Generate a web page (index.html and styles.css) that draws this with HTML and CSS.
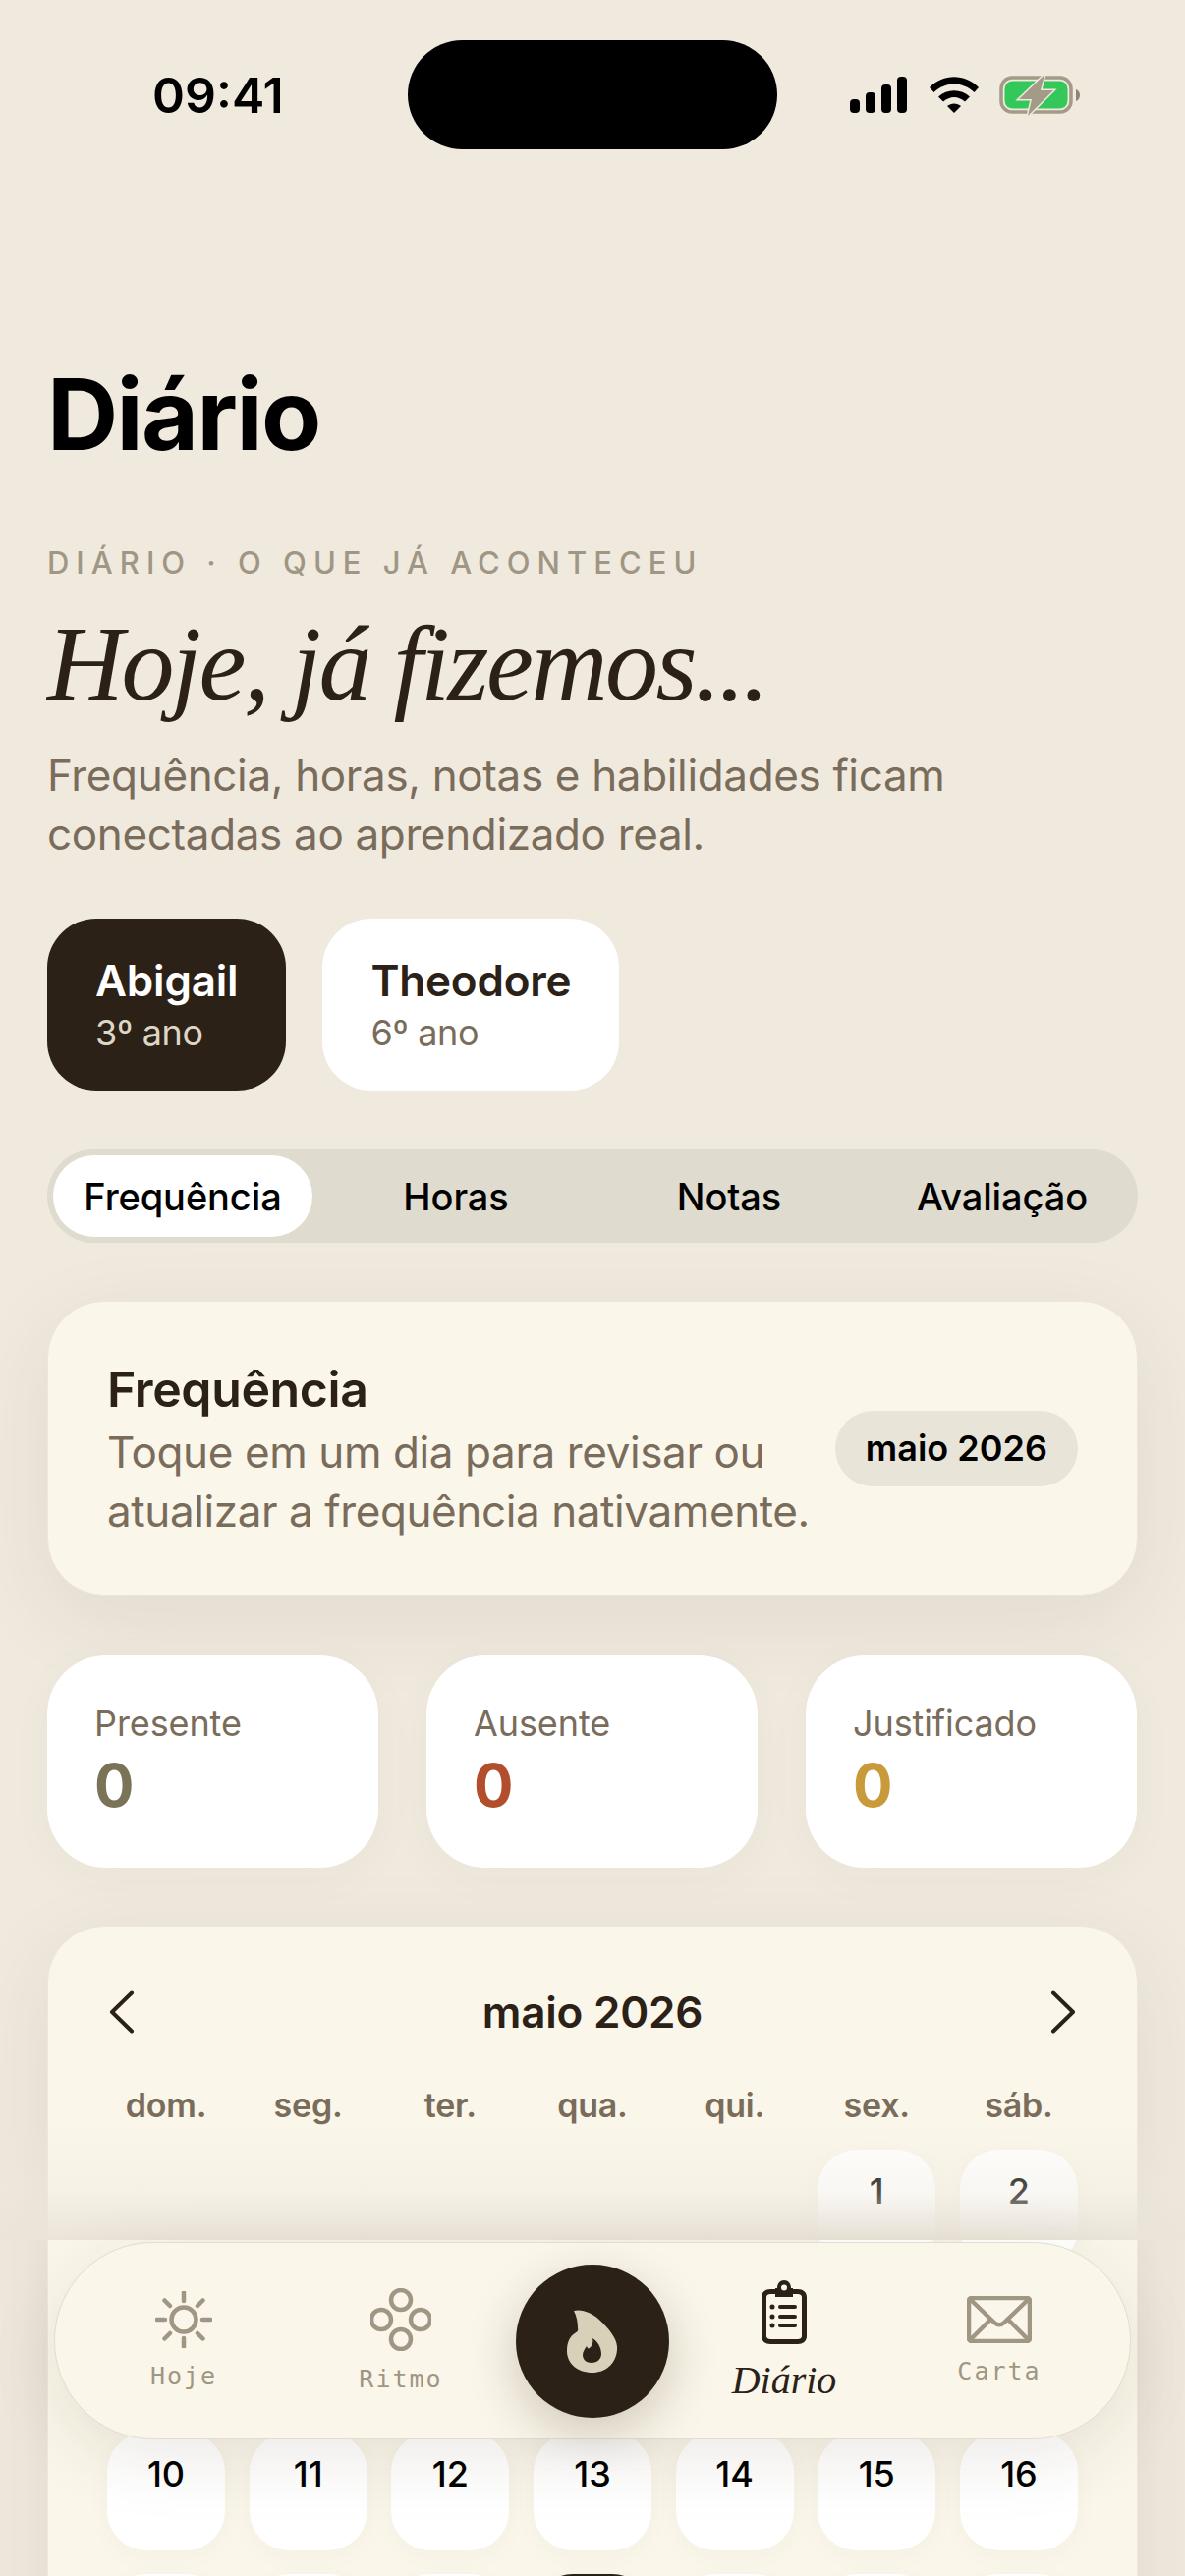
FILE: index.html
```html
<!DOCTYPE html>
<html lang="pt-BR">
<head>
<meta charset="utf-8">
<title>Diário</title>
<link rel="stylesheet" href="styles.css">
</head>
<body>
<div class="screen">
  <header class="status">
    <span class="time">09:41</span>
    <div class="island"></div>
    <div class="status-icons">
      <svg class="ic-signal" width="58" height="37" viewBox="0 0 58 37"><rect x="0" y="23" width="10" height="14" rx="4"/><rect x="16" y="16" width="10" height="21" rx="4"/><rect x="32" y="8" width="10" height="29" rx="4"/><rect x="48" y="0" width="10" height="37" rx="4"/></svg>
      <svg class="ic-wifi" width="50" height="37" viewBox="0 0 50 37"><path d="M0 11 C14 -3.500 36 -3.500 50 11 L45.500 16 C33.500 4.500 16.500 4.500 4.500 16 Z"/><path d="M9 20.500 C18 12 32 12 41 20.500 L36 25.500 C29 19.500 21 19.500 14 25.500 Z"/><path d="M18 30 C22 26.500 28 26.500 32 30 L25 37 Z"/></svg>
      <svg class="ic-batt" width="84" height="40" viewBox="0 0 84 40"><rect x="2" y="2" width="71" height="35" rx="11" fill="none" stroke="#A39A88" stroke-width="3.500"/><rect x="5.500" y="5.500" width="64" height="28" rx="8" fill="#34C759"/><path d="M78 14 C81 15 82 17.500 82 20 C82 22.500 81 25 78 26 Z" fill="#8F8575"/><path d="M46 -1 L20 24 L33 24 L29 41 L55 15 L42 15 Z" fill="#A39A88" stroke="#F0E9DE" stroke-width="3" paint-order="stroke"/></svg>
    </div>
  </header>

  <h1 class="page-title">Diário</h1>
  <p class="eyebrow">DIÁRIO · O QUE JÁ ACONTECEU</p>
  <h2 class="headline">Hoje, já fizemos...</h2>
  <p class="lead">Frequência, horas, notas e habilidades ficam<br>conectadas ao aprendizado real.</p>

  <div class="kids">
    <div class="kid kid-on"><span class="kid-name">Abigail</span><span class="kid-year">3º ano</span></div>
    <div class="kid"><span class="kid-name">Theodore</span><span class="kid-year">6º ano</span></div>
  </div>

  <div class="segment">
    <span class="seg seg-on">Frequência</span>
    <span class="seg">Horas</span>
    <span class="seg">Notas</span>
    <span class="seg">Avaliação</span>
  </div>

  <section class="card intro">
    <div class="intro-text">
      <h3 class="intro-title">Frequência</h3>
      <p class="intro-sub">Toque em um dia para revisar ou<br>atualizar a frequência nativamente.</p>
    </div>
    <span class="badge">maio 2026</span>
  </section>

  <div class="stats">
    <div class="stat"><span class="stat-label">Presente</span><span class="stat-num num-olive">0</span></div>
    <div class="stat"><span class="stat-label">Ausente</span><span class="stat-num num-red">0</span></div>
    <div class="stat"><span class="stat-label">Justificado</span><span class="stat-num num-gold">0</span></div>
  </div>

  <section class="card calendar">
    <div class="cal-head">
      <svg width="30" height="46" viewBox="0 0 30 46" class="chev"><path d="M25 3.500 L5 23 L25 42.500"/></svg>
      <span class="cal-month">maio 2026</span>
      <svg width="30" height="46" viewBox="0 0 30 46" class="chev"><path d="M5 3.500 L25 23 L5 42.500"/></svg>
    </div>
    <div class="week">
      <span>dom.</span><span>seg.</span><span>ter.</span><span>qua.</span><span>qui.</span><span>sex.</span><span>sáb.</span>
    </div>
    <div class="days">
      <span class="blank"></span><span class="blank"></span><span class="blank"></span><span class="blank"></span><span class="blank"></span>
      <span class="day">1</span><span class="day">2</span>
      <span class="day">3</span><span class="day">4</span><span class="day">5</span><span class="day">6</span><span class="day">7</span><span class="day">8</span><span class="day">9</span>
      <span class="day">10</span><span class="day">11</span><span class="day">12</span><span class="day">13</span><span class="day">14</span><span class="day">15</span><span class="day">16</span>
      <span class="day"></span><span class="day"></span><span class="day"></span><span class="day day-today"></span><span class="day"></span><span class="day"></span><span class="day"></span>
    </div>
  </section>

  <div class="scrim"></div>

  <nav class="tabbar">
    <div class="tab">
      <svg width="58" height="58" viewBox="0 0 58 58" class="tab-ic"><circle cx="29" cy="29" r="12.500"/><path d="M29 1.500V10M29 48V56.500M1.500 29H10M48 29H56.500M9.500 9.500L15 15M43 43L48.500 48.500M9.500 48.500L15 43M43 15L48.500 9.500"/></svg>
      <span class="tab-label">Hoje</span>
    </div>
    <div class="tab tab-ritmo">
      <svg width="62" height="64" viewBox="0 0 62 64" class="tab-ic"><circle cx="31" cy="12" r="10"/><circle cx="31" cy="52" r="10"/><circle cx="11" cy="32" r="10"/><circle cx="51" cy="32" r="10"/></svg>
      <span class="tab-label">Ritmo</span>
    </div>
    <div class="fab-slot">
      <button class="fab" type="button" aria-label="Sequência">
        <svg width="52" height="66" viewBox="0 0 52 66"><path fill-rule="evenodd" fill="#D8D0B8" d="M7 2 C14 0 26 3 36 14 C46 24 52 33 51 42 C50 56 39 65 26 65 C11 65 0 56 0 43 C0 34 3 28 8 25 C10 24 12 22 11 20 C11 14 10 8 7 2 Z M26 30 C27 33 26 37 24 39 C22 41 21 41 20 38 C18 41 16 44 16 47 C16 52 20 55 25 55 C31 55 35 51 35 46 C35 39 31 33 26 30 Z"/></svg>
      </button>
    </div>
    <div class="tab tab-on">
      <svg width="46" height="65" viewBox="0 0 46 65" class="tab-ic-solid"><path fill-rule="evenodd" d="M14 8 H16 C16 3 19 0 23 0 C27 0 30 3 30 8 H32 V9 H37 C42 9 46 12 46 17 V57 C46 62 42 65 37 65 H9 C4 65 0 62 0 57 V17 C0 12 4 9 9 9 H14 Z M23 4.500 A3 3 0 1 0 23 10.500 A3 3 0 1 0 23 4.500 Z M14 14 H9 C7 14 5 15 5 17 V57 C5 59 7 60 9 60 H37 C39 60 41 59 41 57 V17 C41 15 39 14 37 14 H32 V17 H14 Z"/><circle cx="11" cy="27" r="2.500"/><circle cx="11" cy="37" r="2.500"/><circle cx="11" cy="46" r="2.500"/><rect x="17" y="25" width="19" height="4" rx="2"/><rect x="17" y="35" width="19" height="4" rx="2"/><rect x="17" y="44" width="19" height="4" rx="2"/></svg>
      <span class="tab-label-on">Diário</span>
    </div>
    <div class="tab">
      <svg width="66" height="48" viewBox="0 0 66 48" class="tab-ic"><rect x="2" y="2" width="62" height="44" rx="3"/><path d="M3 3 L28 27 C31 30 35 30 38 27 L63 3M3 45 L24 24M63 45 L42 24"/></svg>
      <span class="tab-label">Carta</span>
    </div>
  </nav>
</div>
</body>
</html>
```

FILE: styles.css
```css
* { box-sizing: border-box; margin: 0; padding: 0; }
html, body { width: 1206px; height: 2622px; overflow: hidden; background: #F0E9DE; }
body { font-family: "Inter", "Liberation Sans", sans-serif; color: #2B2117; }
.screen { position: relative; width: 1206px; height: 2622px; overflow: hidden; padding: 41px 48px 0; }

.status { display: flex; align-items: center; height: 111px; }
.time { width: 367px; padding-left: 107px; font-size: 50px; font-weight: 600; color: #000; line-height: 1; }
.island { width: 376px; height: 111px; border-radius: 56px; background: #000; }
.status-icons { display: flex; align-items: center; margin-left: 74px; }
.status-icons svg { display: block; fill: #000; overflow: visible; }
.ic-wifi { margin-left: 23px; }
.ic-batt { margin-left: 21px; }

.page-title { margin-top: 215px; font-size: 100px; line-height: 110px; font-weight: 700; color: #000; letter-spacing: -1.6px; }
.eyebrow { margin-top: 77px; font-size: 31px; line-height: 38px; font-weight: 500; letter-spacing: 7px; color: #A09684; }
.headline { margin-top: 24px; font-family: "Liberation Serif", serif; font-style: italic; font-weight: 400; font-size: 108px; line-height: 120px; letter-spacing: -2.5px; color: #2B2117; }
.lead { margin-top: 23px; font-size: 44px; line-height: 60px; letter-spacing: -.35px; color: #7A6C5B; }

.kids { display: flex; gap: 37px; margin-top: 56px; }
.kid { display: flex; flex-direction: column; justify-content: center; height: 175px; padding: 0 49px; border-radius: 50px; background: #fff; }
.kid-on { background: #2B2117; color: #fff; }
.kid-name { font-size: 44px; line-height: 56px; font-weight: 600; letter-spacing: -.2px; }
.kid-year { font-size: 36px; line-height: 50px; letter-spacing: -.3px; color: #7A6C5B; }
.kid-on .kid-year { color: #DDD6C6; }

.segment { display: grid; grid-template-columns: repeat(4, 264px); column-gap: 14px; margin-top: 60px; padding: 6px; height: 95px; border-radius: 48px; background: #DFDBCE; }
.seg { display: flex; align-items: center; justify-content: center; border-radius: 42px; font-size: 38px; font-weight: 500; letter-spacing: -.1px; color: #000; }
.seg-on { background: #fff; }

.card { border: 1px solid #ECE7DA; background: #FAF6EA; border-radius: 58px; box-shadow: 0 24px 90px rgba(70, 50, 20, .08); }
.intro { display: flex; align-items: center; justify-content: space-between; height: 300px; margin-top: 59px; padding: 0 60px; }
.intro-text { padding-top: 5px; }
.intro-title { font-size: 50px; line-height: 58px; font-weight: 600; letter-spacing: -.4px; color: #2B2117; }
.intro-sub { margin-top: 5px; font-size: 44px; line-height: 60px; letter-spacing: -.4px; color: #7A6C5B; }
.badge { display: flex; align-items: center; height: 77px; padding: 0 31px; border-radius: 39px; background: #E9E4D8; font-size: 36px; font-weight: 600; color: #000; }

.stats { display: grid; grid-template-columns: repeat(3, 337px); column-gap: 49px; margin-top: 61px; }
.stat { display: flex; flex-direction: column; height: 216px; padding: 47px 48px 0; background: #fff; border-radius: 60px; box-shadow: 0 10px 50px rgba(70, 50, 20, .03); }
.stat-label { font-size: 36px; line-height: 44px; letter-spacing: -.1px; color: #7A6C5B; }
.stat-num { margin-top: 5px; font-size: 60px; line-height: 72px; font-weight: 700; }
.num-olive { color: #7A7358; }
.num-red { color: #B34E2D; }
.num-gold { color: #C99A3A; }

.calendar { height: 760px; margin-top: 59px; padding: 52px 60px 0; }
.cal-head { display: flex; align-items: center; justify-content: space-between; height: 70px; }
.chev { fill: none; stroke: #2B2117; stroke-width: 4; stroke-linecap: round; stroke-linejoin: round; }
.cal-month { font-size: 44px; font-weight: 600; letter-spacing: -.2px; color: #2B2117; }
.week { display: grid; grid-template-columns: repeat(7, 120px); justify-content: space-between; margin-top: 38px; font-size: 34px; line-height: 44px; font-weight: 600; letter-spacing: -.2px; color: #7A6C5B; text-align: center; }
.days { display: grid; grid-template-columns: repeat(7, 120px); justify-content: space-between; row-gap: 24px; margin-top: 23px; }
.day { display: block; height: 120px; padding-top: 19px; border-radius: 40px; background: #fff; box-shadow: 0 6px 24px rgba(70, 50, 20, .03); text-align: center; font-size: 36px; line-height: 46px; font-weight: 500; color: #000; }
.blank { height: 120px; }
.day-today { background: #2B2117; color: #fff; }

.scrim { position: absolute; left: 0; right: 0; top: 2160px; height: 120px; background: linear-gradient(to bottom, rgba(240, 233, 222, 0), rgba(238, 232, 220, .35) 60%, rgba(234, 228, 217, 1)); }

.tabbar { position: absolute; left: 55px; top: 2282px; width: 1096px; height: 201px; display: grid; grid-template-columns: 262px 180px 210px 180px 1fr; padding-right: 4px; align-items: center; border: 1px solid #E2DDD0; border-radius: 101px; background: #FAF6EA; box-shadow: 0 20px 70px rgba(70, 50, 20, .10); }
.tab { display: flex; flex-direction: column; align-items: center; justify-content: center; }
.tab-ritmo { padding-top: 1px; }
.tab-on { padding-top: 3px; }
.tab-ic { fill: none; stroke: #A09684; stroke-width: 4.5; stroke-linecap: round; stroke-linejoin: round; display: block; }
.tab-ic-solid { fill: #2B2117; display: block; }
.tab-label { margin-top: 14px; font-family: "DejaVu Sans Mono", "Liberation Mono", monospace; font-size: 25px; line-height: 30px; letter-spacing: 2px; color: #A09684; }
.tab-label-on { margin-top: 13px; font-family: "Liberation Serif", serif; font-style: italic; font-size: 40px; line-height: 48px; color: #2B2117; }
.fab-slot { display: flex; justify-content: center; }
.fab { display: flex; align-items: center; justify-content: center; width: 156px; height: 156px; border: 0; border-radius: 50%; background: #2B2117; box-shadow: 0 16px 50px rgba(60, 40, 10, .22); }
.fab svg { display: block; }
```
